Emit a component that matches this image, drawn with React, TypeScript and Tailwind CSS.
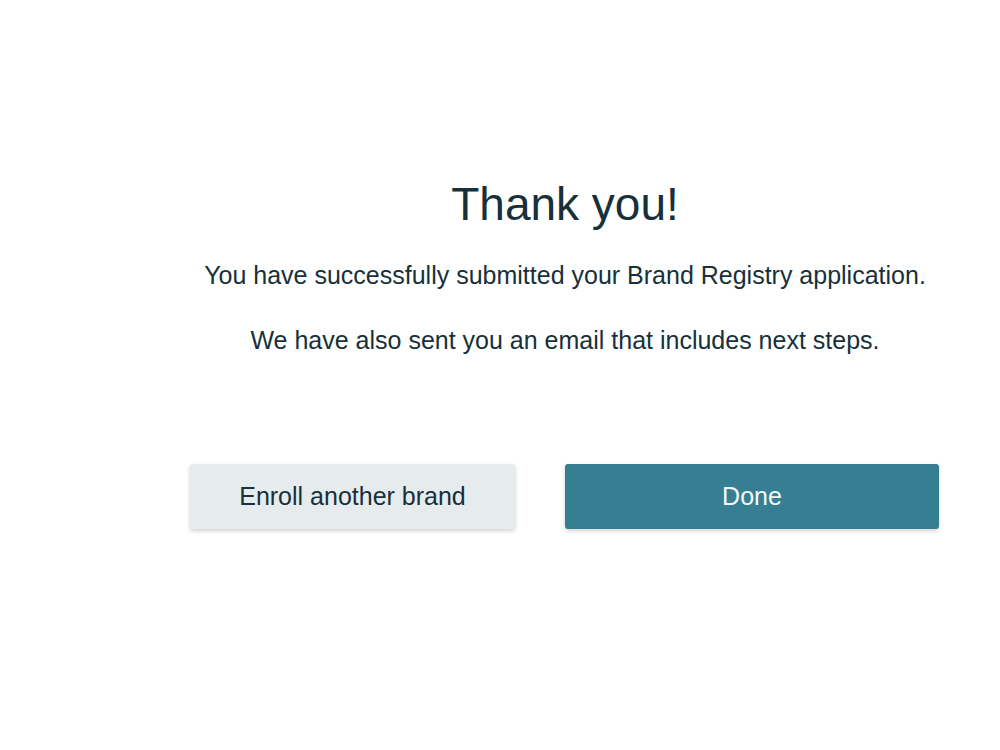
import React from "react";

export default function App() {
  return (
    <div
      className="w-[1000px] h-[750px] bg-white flex"
      style={{ fontFamily: '"Liberation Sans", Arial, sans-serif' }}
    >
      <div className="w-[130px] shrink-0" />
      <div className="flex-1 flex flex-col items-center pt-[181px] text-[#17303a]">
        <h1 className="text-[46px] leading-[46px] font-normal text-center">Thank you!</h1>
        <p className="mt-[36px] text-[25px] leading-[25px] text-center whitespace-nowrap">
          You have successfully submitted your Brand Registry application.
        </p>
        <p className="mt-[40px] text-[25px] leading-[25px] text-center whitespace-nowrap">
          We have also sent you an email that includes next steps.
        </p>
        <div className="mt-[111px] w-[750px] flex gap-[50px]">
          <button className="w-[325px] h-[65px] rounded-[3px] bg-[#e6ecee] text-[25px] text-[#17303a] shadow-[0_2px_4px_rgba(0,0,0,0.18)]">
            Enroll another brand
          </button>
          <button className="w-[374px] h-[65px] rounded-[3px] bg-[#367f92] text-[25px] text-[#f2fafb] shadow-[0_2px_4px_rgba(0,0,0,0.18)]">
            Done
          </button>
        </div>
      </div>
    </div>
  );
}
